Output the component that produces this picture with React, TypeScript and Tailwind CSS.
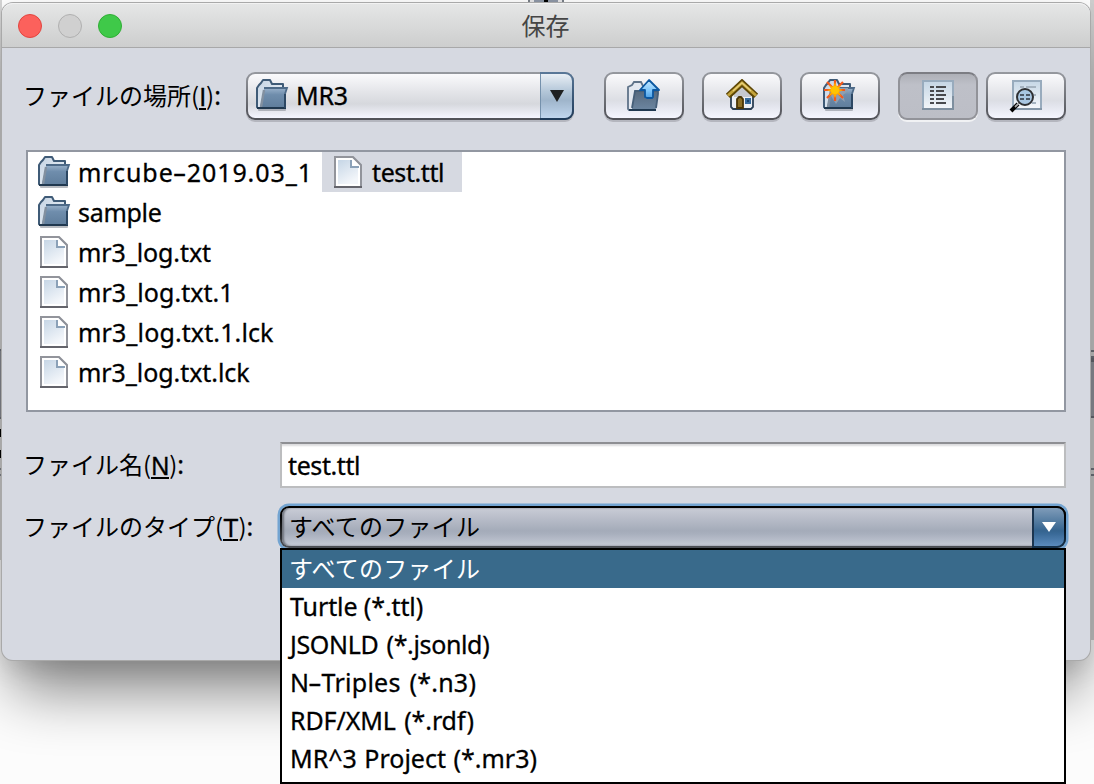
import type { ReactNode } from "react";

function Folder({ children, shadow = true }: { children?: ReactNode; shadow?: boolean }) {
  return (
    <svg width="34" height="34" viewBox="0 0 34 34" className="shrink-0">
      <defs>
        <linearGradient id="flap" x1="0" y1="0" x2="0" y2="1">
          <stop offset="0" stopColor="#93acc6" />
          <stop offset="0.3" stopColor="#6f8dac" />
          <stop offset="1" stopColor="#5f7d9b" />
        </linearGradient>
        <linearGradient id="back" x1="0" y1="0" x2="1" y2="1">
          <stop offset="0" stopColor="#c3d2e2" />
          <stop offset="1" stopColor="#f4f8fc" />
        </linearGradient>
      </defs>
      {shadow && <rect x="2" y="29" width="28" height="3" rx="1" fill="#8b8f98" opacity=".6" />}
      <path d="M1 28V9L3 6L5 4L7 1H14L16 5H27V10V29H2Z" fill="url(#back)" stroke="#3f5b77" strokeWidth="2" strokeLinejoin="round" />
      <path d="M4 28L8 10H31L28 16V29H4Z" fill="url(#flap)" />
      <path d="M8 9H31L29 15V28" fill="none" stroke="#4d6a88" strokeWidth="1.8" />
      <path d="M5 28L8 11" stroke="#8290a0" strokeWidth="2.4" />
      <path d="M1 29H30" stroke="#20384f" strokeWidth="2" />
      <path d="M29 15V29" stroke="#2c4763" strokeWidth="2" />
      {children}
    </svg>
  );
}

function FileIcon() {
  return (
    <svg width="32" height="32" viewBox="0 0 32 32" className="shrink-0">
      <defs>
        <linearGradient id="sheet" x1="0" y1="0" x2="0.5" y2="1">
          <stop offset="0" stopColor="#c6d6e6" />
          <stop offset="1" stopColor="#f3f6fa" />
        </linearGradient>
      </defs>
      <path d="M3 1H21L29 9V31H3Z" fill="#fff" stroke="#92949b" strokeWidth="2" />
      <path d="M6 4H18V12H26V28H6Z" fill="url(#sheet)" />
      <path d="M21 2L28 9V10H20V2Z" fill="#fff" />
      <path d="M19 4V11H27" fill="none" stroke="#8ba1b8" strokeWidth="2" />
      <path d="M21 1.5L28.5 9" stroke="#8d9199" strokeWidth="1.6" />
      <path d="M2 31H30" stroke="#64646b" strokeWidth="2" />
    </svg>
  );
}

function UpFolderIcon() {
  return (
    <svg width="34" height="34" viewBox="0 0 34 34">
      <defs>
        <linearGradient id="upflap" x1="0" y1="0" x2="0" y2="1">
          <stop offset="0" stopColor="#56697e" />
          <stop offset="1" stopColor="#6c86a1" />
        </linearGradient>
        <linearGradient id="arrow" x1="0" y1="0" x2="0" y2="1">
          <stop offset="0" stopColor="#c4e8ff" />
          <stop offset="0.6" stopColor="#7fc6fb" />
          <stop offset="1" stopColor="#4c9fe5" />
        </linearGradient>
      </defs>
      <path d="M1 30V8L5 6L7 3H14L16 7H25V31H2Z" fill="#e3e8f0" stroke="#5f7389" strokeWidth="1.8" />
      <path d="M5 30L8 12H31V15L29 29L28 31H3Z" fill="url(#upflap)" />
      <path d="M5 29L8 12H31V15L29 29" fill="none" stroke="#465f79" strokeWidth="1.8" />
      <path d="M2 31H29" stroke="#1f3850" strokeWidth="2" />
      <path d="M22 1L32 11H26V18L25 19H20L18 18V11H13Z" fill="url(#arrow)" stroke="#0c57a0" strokeWidth="1.8" strokeLinejoin="round" />
    </svg>
  );
}

function HomeIcon() {
  return (
    <svg width="34" height="34" viewBox="0 0 34 34">
      <path d="M6 15L17 6L28 15V28L26 30H8L6 28Z" fill="#edf0f6" stroke="#2b3f55" strokeWidth="1.8" />
      <path d="M9 14L17 7L26 15V18H9Z" fill="#c5c8d0" />
      <path d="M12 29V20L14 18H16L18 20V29Z" fill="#8c6f26" stroke="#4a3505" strokeWidth="1.8" />
      <rect x="20" y="19" width="6" height="6" fill="#356a9c" />
      <rect x="22" y="21" width="2" height="2" fill="#16406c" />
      <path d="M3 17L17 4L31 17" fill="none" stroke="#5d4605" strokeWidth="6.4" />
      <path d="M3 16.5L17 4L31 16.5" fill="none" stroke="#c3a33b" strokeWidth="3" />
      <path d="M8 12L17 3.8L26 12" fill="none" stroke="#ead27b" strokeWidth="1.2" />
    </svg>
  );
}

function Burst() {
  return (
    <g>
      <path d="M8 17L13 25L17 19L22 23L20 16L25 12V9H9Z" fill="#8f9fb0" />
      <path d="M12 1V22M1 11H22M4 3L20 19M20 3L4 19" stroke="#f4581c" strokeWidth="2.2" />
      <path d="M12 3L14 8L18 6L16 10L20 11L16 13L18 17L14 15L12 19L10 15L6 17L8 13L4 11L8 10L6 6L10 8Z" fill="#ffa800" />
      <circle cx="12" cy="11" r="4" fill="#ffc400" />
    </g>
  );
}

function ListIcon() {
  return (
    <svg width="32" height="30" viewBox="0 0 32 30">
      <defs>
        <linearGradient id="pane" x1="0" y1="0" x2="0" y2="1">
          <stop offset="0" stopColor="#c4d5e4" />
          <stop offset="1" stopColor="#f3f6f9" />
        </linearGradient>
      </defs>
      <rect x="1" y="1" width="30" height="28" fill="url(#pane)" stroke="#98abbd" strokeWidth="2" />
      <path d="M0 29H32M31 16V29" stroke="#7e8f9f" strokeWidth="2" />
      <path d="M8 7H12M8 11H12M8 15H12M8 19H12M8 23H12M14 7H24M14 11H22M14 15H24M14 19H22M14 23H24" stroke="#484a4e" strokeWidth="2" />
    </svg>
  );
}

function DetailsIcon() {
  return (
    <svg width="34" height="34" viewBox="0 0 34 34">
      <defs>
        <linearGradient id="dpane" x1="0" y1="0" x2="0" y2="1">
          <stop offset="0" stopColor="#c6d7e6" />
          <stop offset="1" stopColor="#f6f8fb" />
        </linearGradient>
      </defs>
      <rect x="4" y="2" width="28" height="28" fill="url(#dpane)" stroke="#98abbd" strokeWidth="2" />
      <path d="M3 30H33" stroke="#8496a7" strokeWidth="2" />
      <path d="M11 8H15M17 8H27M25 16H27M23 24H27" stroke="#a5b3c0" strokeWidth="2" />
      <path d="M9 25L2 32" stroke="#000" strokeWidth="4" />
      <path d="M11 23L6 28" stroke="#a9a9a9" strokeWidth="1.8" />
      <circle cx="16" cy="18" r="8" fill="#a9c7e2" stroke="#2e3033" strokeWidth="2" />
      <path d="M11 16H15M17 16H21M11 20H15M17 20H21" stroke="#4c5866" strokeWidth="2" />
    </svg>
  );
}

function ToolButton({ children, className = "" }: { children: ReactNode; className?: string }) {
  return (
    <button className={`h-12 w-20 shrink-0 rounded-[9px] bg-linear-to-b from-[#96999f] to-[#505157] p-[2px] shadow-[0_2px_0_#b4b6be] ${className}`}>
      <span className="flex h-full w-full items-center justify-center rounded-[7px] bg-[linear-gradient(#fafafc,#e8e9ed_35%,#dcdee4_60%,#e0e2ea_68%,#f5f6ff)]">
        {children}
      </span>
    </button>
  );
}

const latin = "font-['Noto_Sans','Noto_Sans_CJK_JP',sans-serif] text-[25px] [-webkit-text-stroke:0.3px_currentColor]";
const kana = "font-['Noto_Sans_CJK_JP',sans-serif] text-[24px] [-webkit-text-stroke:0px]";

function Hyphen() {
  return <span className="mx-[2px] inline-block scale-x-[1.7]">-</span>;
}

function Label({ text, mnemonic }: { text: string; mnemonic: string }) {
  return (
    <label className="-mt-[3px] -ml-px flex items-center whitespace-nowrap leading-[32px]">
      <span className={kana}>{text}</span>
      <span className={kana}>(</span>
      <span className="mt-[3px] h-[27px] border-b-2 border-black font-['Liberation_Sans',sans-serif] leading-[29px]">{mnemonic}</span>
      <span className={kana}>)</span>
      <span>:</span>
    </label>
  );
}

function Row({ icon, children, className = "" }: { icon: ReactNode; children: ReactNode; className?: string }) {
  return (
    <div className={`flex h-10 items-start gap-[8px] pt-1 pl-[10px] ${className}`}>
      <span className="flex w-8 shrink-0">{icon}</span>
      <span className="leading-[32px] whitespace-pre">{children}</span>
    </div>
  );
}

export default function App() {
  return (
    <div className={`relative h-[784px] w-[1094px] overflow-hidden bg-[#fcfcfc] text-black ${latin}`}>
      {/* Slivers of the window underneath */}
      <div className="absolute top-0 left-[528px] flex h-[4px] w-[36px] justify-center border-x-2 border-[#777d87] bg-[#e4e4e6]">
        <span className="h-full w-[24px] border-x-[10px] border-[#8d96a5] bg-black" />
      </div>
      <div className="absolute top-0 left-0 h-[560px] w-[2px] bg-[#d3d3d3]">
        <div className="mt-[349px] h-[70px] border-t-2 border-b-2 border-[#73777f] bg-[#8d9097]" />
        <div className="mt-[10px] h-[8px] bg-black" />
        <div className="mt-[13px] h-[8px] bg-black" />
        <div className="mt-[10px] h-[8px] border-y-2 border-[#888c94]" />
      </div>
      <div className="absolute top-0 left-[1090px] h-[640px] w-[4px] bg-[#cecece]">
        <div className="mt-[350px] h-[8px] border-y-2 border-[#73777f]" />
        <div className="h-[60px] border-t-[4px] border-b-2 border-[#6a6d75] bg-[#94979f]" />
        <div className="mt-[50px] h-[8px] border-y-2 border-[#73777f]" />
      </div>

      <div className="relative mt-[3px] ml-[2px] h-[657px] w-[1088px] rounded-[11px] bg-[#d6d9e1] shadow-[0_0_0_1px_#a9a9a9,0_40px_60px_-10px_rgba(0,0,0,0.48),0_10px_24px_rgba(0,0,0,0.1)]">
        <header className="flex h-[45px] items-center rounded-t-[11px] border-t border-b border-t-[#f2f2f2] border-b-[#a8a8a9] bg-linear-to-b from-[#e5e6e6] to-[#cdcece] pl-4">
          <div className="flex w-[104px] shrink-0 gap-4">
            <span className="size-6 rounded-full border border-[#e2453f] bg-[#fc615c]" />
            <span className="size-6 rounded-full border border-[#b0b0b0] bg-[#d0d0d0]" />
            <span className="size-6 rounded-full border border-[#2fae34] bg-[#3fc949]" />
          </div>
          <h1 className={`-mt-px flex-1 pr-[121px] text-center text-[#454545] ${kana}`}>保存</h1>
        </header>

        <main className="flex flex-col pt-6 pr-[24px] pl-[22px]">
          <div className="flex h-12 items-center">
            <div className="w-[222px] shrink-0">
              <Label text="ファイルの場所" mnemonic="I" />
            </div>
            <div className="flex h-12 w-[328px] shrink-0 rounded-[9px] bg-linear-to-b from-[#96999f] to-[#505157] shadow-[0_2px_0_#b4b6be]">
              <div className="my-[2px] ml-[2px] flex flex-1 items-center gap-[6px] rounded-l-[7px] bg-[linear-gradient(#fafafc,#e4e5e9_40%,#d6d8dd_68%,#f5f6ff)] pl-[8px]">
                <Folder />
                <span className="tracking-[-0.3px]">MR3</span>
              </div>
              <div className="w-[34px] rounded-r-[9px] bg-linear-to-b from-[#5a7898] to-[#1e3a58] py-[2px] pr-[2px]">
                <div className="flex h-full items-center justify-center rounded-r-[7px] border-l border-[#7591ac] bg-[linear-gradient(#e9eff5,#b3c6d8_40%,#9fb5cb_60%,#c0d6ee)]">
                  <svg width="14" height="12" viewBox="0 0 14 12"><path d="M0 0H14L7 12Z" fill="#1f2020" /></svg>
                </div>
              </div>
            </div>
            <ToolButton className="ml-[30px]"><UpFolderIcon /></ToolButton>
            <ToolButton className="ml-[18px]"><HomeIcon /></ToolButton>
            <ToolButton className="ml-[18px]"><Folder><Burst /></Folder></ToolButton>
            <button className="ml-[18px] flex h-12 w-20 shrink-0 items-center justify-center rounded-[9px] border-2 border-[#929399] border-t-[#7c7d83] bg-[linear-gradient(#aeb0b7,#bec0c8_25%,#bcbec6)] pb-[2px] shadow-[0_2px_0_#f1f2f4]">
              <ListIcon />
            </button>
            <ToolButton className="ml-2"><DetailsIcon /></ToolButton>
          </div>

          <div className="mt-[30px] ml-[2px] flex h-[262px] border-2 border-[#9297a1] bg-white">
            <div className="w-[294px] shrink-0">
              <Row icon={<Folder />}><span className="tracking-[0.93px]">mrcube<Hyphen />2019.03_1</span></Row>
              <Row icon={<Folder />}><span className="tracking-[-0.3px]">sample</span></Row>
              <Row icon={<FileIcon />}><span className="tracking-[-0.1px]">mr3_log.txt</span></Row>
              <Row icon={<FileIcon />}><span className="tracking-[0.05px]">mr3_log.txt.1</span></Row>
              <Row icon={<FileIcon />}><span className="tracking-[0.12px]">mr3_log.txt.1.lck</span></Row>
              <Row icon={<FileIcon />}><span className="tracking-[-0.07px]">mr3_log.txt.lck</span></Row>
            </div>
            <Row icon={<FileIcon />} className="w-[140px] bg-[#d6d9e1]"><span className="tracking-[-0.4px]">test.ttl</span></Row>
          </div>

          <div className="mt-[30px] flex h-[46px] items-center">
            <div className="w-[256px] shrink-0">
              <Label text="ファイル名" mnemonic="N" />
            </div>
            <input
              defaultValue="test.ttl"
              className="h-[46px] w-[786px] border-2 border-[#bcbdbf] border-t-[#8e8f93] bg-white pl-[6px] tracking-[-0.4px] shadow-[inset_0_3px_2px_-1px_#dcdcde] outline-none"
            />
          </div>

          <div className="mt-[18px] flex h-[42px] items-center">
            <div className="w-[256px] shrink-0">
              <Label text="ファイルのタイプ" mnemonic="T" />
            </div>
            <div className="flex h-[42px] w-[786px] overflow-visible rounded-[9px] bg-linear-to-b from-black to-[#4e5158] shadow-[0_0_0_2.5px_#73a4d1]">
              <div className="my-[2px] ml-[2px] flex flex-1 items-center rounded-l-[7px] bg-[linear-gradient(#c9ccd6,#a4abb9_60%,#a8afbd_68%,#c5cad6)] pl-[7px] shadow-[inset_2px_0_2px_#70747d]">
                <span className={`-mt-[2px] tracking-[0.25px] ${kana}`}>すべてのファイル</span>
              </div>
              <div className="w-[34px] rounded-r-[9px] bg-linear-to-b from-black to-[#17344f] py-[2px] pr-[2px]">
                <div className="flex h-full items-center justify-center rounded-r-[7px] border-l-2 border-[#1b3550] bg-[linear-gradient(#7f9cb9,#35648f_60%,#3a6a98_68%,#5b8bbd)]">
                  <svg width="14" height="10" viewBox="0 0 14 10"><path d="M0 0H14L7 10Z" fill="#fff" /></svg>
                </div>
              </div>
            </div>
          </div>
        </main>
      </div>

      <ul className="absolute top-[548px] left-[280px] h-[236px] w-[786px] border-2 border-black bg-white leading-[36px] whitespace-pre">
        <li className={`h-[38px] bg-[#396a8b] pl-[7px] tracking-[0.25px] text-white ${kana}`}>すべてのファイル</li>
        <li className="h-[38px] pl-2 tracking-[-0.1px] word-spacing-normal">Turtle (*.ttl)</li>
        <li className="h-[38px] pl-2 tracking-[-0.35px] [word-spacing:2px]">JSONLD (*.jsonld)</li>
        <li className="h-[38px] pl-2 tracking-[0.25px] [word-spacing:2px]">N<Hyphen />Triples (*.n3)</li>
        <li className="h-[38px] pl-2 tracking-[-0.1px] [word-spacing:2px]">RDF/XML (*.rdf)</li>
        <li className="h-[38px] pl-2 tracking-[0px] [word-spacing:1px]">MR^3 Project (*.mr3)</li>
      </ul>
    </div>
  );
}
